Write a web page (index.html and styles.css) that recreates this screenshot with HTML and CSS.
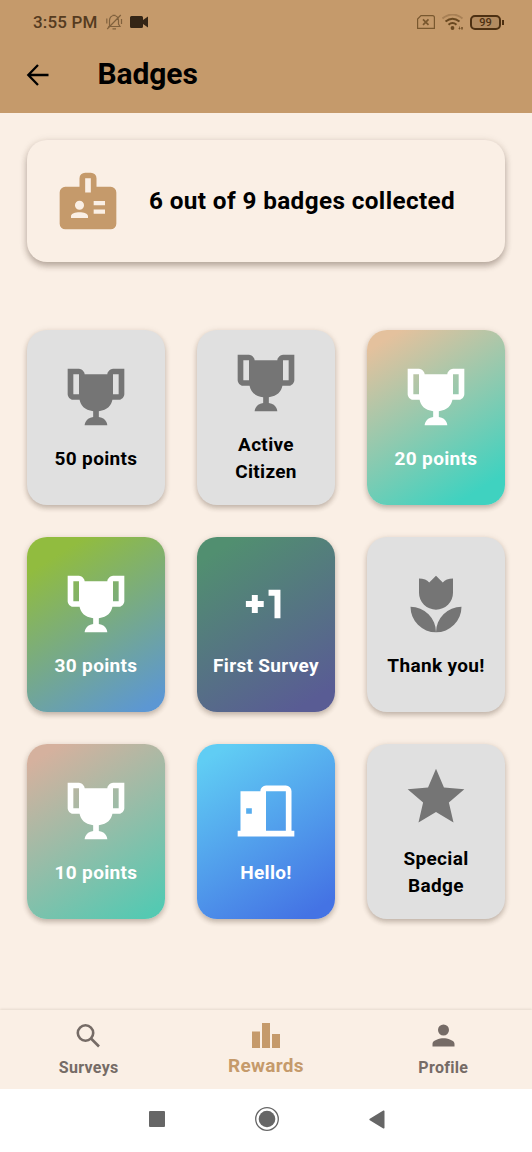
FILE: index.html
```html
<!DOCTYPE html>
<html lang="en">
<head>
<meta charset="utf-8">
<title>Badges</title>
<link rel="stylesheet" href="styles.css">
</head>
<body>
<svg class="defs" width="0" height="0" aria-hidden="true">
  <symbol id="trophy" viewBox="0 0 24 24"><path d="M18 2C17.1 2 16 3 16 4H8C8 3 6.9 2 6 2H2V11C2 12 3 13 4 13H6.2C6.6 15 7.9 16.7 11 17V19.08C8 19.54 8 22 8 22H16C16 22 16 19.54 13 19.08V17C16.1 16.7 17.4 15 17.8 13H20C21 13 22 12 22 11V2H18M6 11H4V4H6V11M20 11H18V4H20V11Z"/></symbol>
</svg>
<div class="screen">
  <header class="top">
    <div class="status">
      <span class="time">3:55 PM</span>
      <svg class="bell" viewBox="0 0 18 18"><path d="M4.5 13.500V7.500a4.500 5 0 0 1 9 0v3.500l1.500 2.500H3.200M7.500 15.800h3.500M2.200 16 15.800 2M1.800 5.500v5M16.500 6v5M7.500 2.300h3"/></svg>
      <svg class="camera" viewBox="0 0 18 12"><path d="M1.500 0h10A1.500 1.500 0 0 1 13 1.500V4l5-3.500v11L13 8v2.500a1.500 1.500 0 0 1-1.500 1.500h-10A1.500 1.500 0 0 1 0 10.500v-9A1.500 1.500 0 0 1 1.500 0z"/></svg>
      <svg class="sim" viewBox="0 0 18 14"><path d="M4 .6h11.500a1.900 1.900 0 0 1 1.900 1.900v10.900H.6V4z"/><path class="cross" d="m6 4.300 5.500 5.500m0-5.500-5.500 5.500"/></svg>
      <svg class="wifi" viewBox="0 0 22 17"><path class="faint" d="M.5 4.500Q10.500-3.500 20.500 4.500"/><path d="M3.500 7.500Q10.500 2 17.500 7.500M6.500 10.800q4-3.500 8 0"/><circle cx="10.500" cy="14" r="1.900"/><path class="tiny" d="M16.500 14.500h2m-1-2v3m2-2.500v2.500m1-2.500v2.500"/></svg>
      <span class="battery">99</span>
    </div>
    <div class="appbar">
      <svg class="back" viewBox="0 0 24 24"><path d="M22.500 12H3M12 2 2.300 12 12 22"/></svg>
      <h1 class="title">Badges</h1>
    </div>
  </header>

  <main class="content">
    <section class="summary">
      <svg class="icon" viewBox="0 0 24 24"><path fill-rule="evenodd" d="M9 7V4a2 2 0 0 1 2-2h2a2 2 0 0 1 2 2v3h5a2 2 0 0 1 2 2v11a2 2 0 0 1-2 2H4a2 2 0 0 1-2-2V9a2 2 0 0 1 2-2zM11 4v5h2V4zM7.400 13.500a1.600 1.600 0 1 0 3.200 0a1.600 1.600 0 1 0-3.200 0zM6 18h6v-.6C12 16.500 10.500 16 9 16s-3 .5-3 1.400zM14 12v1.500h4V12zM14 15v1.500h4V15z"/></svg>
      <p class="summary-text">6 out of 9 badges collected</p>
    </section>

    <section class="badges">
      <article class="badge"><svg class="icon"><use href="#trophy"/></svg><p class="label">50 points</p></article>
      <article class="badge"><svg class="icon"><use href="#trophy"/></svg><p class="label">Active<br>Citizen</p></article>
      <article class="badge earned twenty"><svg class="icon"><use href="#trophy"/></svg><p class="label">20 points</p></article>
      <article class="badge earned thirty"><svg class="icon"><use href="#trophy"/></svg><p class="label">30 points</p></article>
      <article class="badge earned first"><svg class="icon" viewBox="0 0 24 24"><path d="M7 8.800v2.100H4.900v2.200H7v2.100h2.100v-2.100h2.100v-2.200H9.100V8.800zM12.900 7v2.100H15v7.900h2.100V7z"/></svg><p class="label">First Survey</p></article>
      <article class="badge"><svg class="icon" viewBox="0 0 24 24"><path d="M3 13A9 9 0 0 0 12 22A9 9 0 0 0 3 13M12 22A9 9 0 0 0 21 13A9 9 0 0 0 12 22M18 3V8A6 6 0 0 1 6 8V3C6.740 3 7.470 3.120 8.160 3.390C8.710 3.620 9.200 3.960 9.610 4.390L12 2L14.390 4.390C14.800 3.960 15.290 3.620 15.840 3.390C16.530 3.120 17.260 3 18 3Z"/></svg><p class="label">Thank you!</p></article>
      <article class="badge earned ten"><svg class="icon"><use href="#trophy"/></svg><p class="label">10 points</p></article>
      <article class="badge earned hello"><svg class="icon" viewBox="0 0 24 24"><path fill-rule="evenodd" d="M2 19h1V5h7a2 2 0 0 1 2-2h7a2 2 0 0 1 2 2v14h1v2H2zM12 5v14h7V5zM5 11v2h2v-2z"/></svg><p class="label">Hello!</p></article>
      <article class="badge"><svg class="icon" viewBox="0 0 24 24"><path d="M12 17.270L18.180 21L16.540 13.970L22 9.240L14.810 8.620L12 2L9.190 8.620L2 9.240L7.450 13.970L5.820 21L12 17.270Z"/></svg><p class="label">Special<br>Badge</p></article>
    </section>
  </main>

  <nav class="tabs">
    <div class="tab"><svg class="tab-icon search" viewBox="0 0 33 33"><circle cx="13.500" cy="14" r="7.700"/><path d="m19 19.500 8 8"/></svg><span>Surveys</span></div>
    <div class="tab active"><svg class="tab-icon" viewBox="0 0 28 25"><path d="M0 8.500h8V25H0zM10 0h8v25h-8zM20 11h8v14h-8z"/></svg><span>Rewards</span></div>
    <div class="tab"><svg class="tab-icon" viewBox="0 0 24 24"><path d="M12 12a4 4 0 1 0 0-8 4 4 0 0 0 0 8zm0 2c-2.670 0-8 1.340-8 4v2h16v-2c0-2.660-5.330-4-8-4z"/></svg><span>Profile</span></div>
  </nav>
  <footer class="system">
    <svg class="key" viewBox="0 0 26 26"><rect x="5" y="5" width="16" height="16" rx="1"/></svg>
    <svg class="key" viewBox="0 0 26 26"><circle cx="13" cy="13" r="8.300"/><circle class="ring" cx="13" cy="13" r="11.300"/></svg>
    <svg class="key" viewBox="0 0 26 26"><path d="M20.500 5.200v16.600a.8.800 0 0 1-1.200.6L5.800 14.200a.8.800 0 0 1 0-1.400L19.300 4.600a.8.800 0 0 1 1.200.6z"/></svg>
  </footer>
</div>
</body>
</html>
```
FILE: styles.css
```css
* { box-sizing: border-box; margin: 0; }
body { font-family: Roboto, sans-serif; font-weight: 700; color: #000; background: #faefe5; }
svg { display: block; flex: none; }
.defs { position: absolute; }
.screen { width: 532px; height: 1152px; display: flex; flex-direction: column; overflow: hidden; }

.top { height: 113px; background: #c59a6b; }
.status { height: 44px; display: flex; align-items: center; padding: 0 31px 0 33px; }
.time { font-size: 17px; font-weight: 500; letter-spacing: .15px; width: 72px; color: #553b20; white-space: nowrap; }
.bell { width: 18px; height: 18px; fill: none; stroke: #80613d; stroke-width: 1.200; }
.camera { width: 18px; height: 12px; margin-left: 6.500px; fill: #342516; }
.sim { width: 18px; height: 14px; margin-left: auto; fill: none; stroke: #79582f; stroke-width: 1.200; }
.cross { stroke-width: 1.700; }
.wifi { width: 22px; height: 17px; margin: 0 6px 0 7px; fill: #694820; }
.wifi path { fill: none; stroke: #694820; stroke-width: 2; }
.wifi .faint { stroke: #a88055; }
.wifi .tiny { stroke-width: .7; }
.battery { position: relative; width: 31px; height: 15px; border: 2px solid #4d3012; border-radius: 5px; background: #b38b60; font-size: 11px; font-weight: 500; line-height: 11.500px; text-align: center; color: #4d3012; }
.battery::after { content: ""; position: absolute; right: -5px; top: 3px; width: 2px; height: 5px; background: #4d3012; }
.appbar { height: 61px; display: flex; align-items: center; padding-left: 26px; }
.back { width: 24px; height: 24px; fill: none; stroke: #000; stroke-width: 2.300; }
.title { margin: -2px 0 0 47.500px; font-size: 30px; font-weight: 700; line-height: 34px; letter-spacing: -.1px; }

.content { flex: 1; padding: 27px 27px 0; }
.summary { height: 122px; display: flex; align-items: center; padding-left: 27px; border-radius: 20px; background: #faefe5; box-shadow: 0 4px 6px rgba(60, 40, 25, .3), 0 1px 8px rgba(60, 40, 25, .12); }
.summary .icon { fill: #c59a6b; }
.summary-text { margin: -1px 0 0 27px; font-size: 24.300px; letter-spacing: .38px; white-space: nowrap; }
.icon { width: 68px; height: 68px; fill: #757575; }
.badges { display: grid; grid-template-columns: repeat(3, 138px); grid-auto-rows: 175px; column-gap: 32px; row-gap: 32px; margin-top: 67.500px; }
.badge { display: flex; flex-direction: column; align-items: center; justify-content: center; gap: 14px; border-radius: 20px; background: #e0e0e0; box-shadow: 0 3px 5px rgba(60, 40, 25, .24), 0 1px 7px rgba(60, 40, 25, .1); }
.label { font-size: 19px; line-height: 27px; letter-spacing: .33px; text-align: center; white-space: nowrap; }
.earned { color: #fff; }
.earned .icon { fill: #fff; }
.twenty { background: linear-gradient(148deg, #e4c19d 8%, #3fd2c0 88%); }
.thirty { background: linear-gradient(148deg, #91bc3f 14%, #5c97d3 94%); }
.first { background: linear-gradient(148deg, #518f70 10%, #595c94 90%); }
.ten { background: linear-gradient(148deg, #d5b19e 8%, #55c9b2 94%); }
.hello { background: linear-gradient(148deg, #60cdf4 8%, #4473e4 92%); }

.tabs { height: 79px; display: grid; grid-template-columns: repeat(3, 1fr); background: #faefe5; box-shadow: 0 -1px 2px rgba(90, 70, 50, .12); }
.tab { display: flex; flex-direction: column; align-items: center; padding-top: 9px; font-size: 16px; line-height: 20px; letter-spacing: .3px; color: #756b66; }
.tab-icon { width: 33px; height: 33px; margin-bottom: 6px; fill: #756b66; }
.search { fill: none; stroke: #756b66; stroke-width: 2.600; }
.active { padding-top: 13px; font-size: 19px; line-height: 22px; letter-spacing: .3px; color: #c59a6b; }
.active .tab-icon { width: 28px; height: 25px; margin-bottom: 7px; fill: #c59a6b; }
.system { height: 63px; display: flex; justify-content: center; gap: 84px; padding: 17px 0 0 2px; background: #fff; }
.key { width: 26px; height: 26px; fill: #666; }
.ring { fill: none; stroke: #666; stroke-width: 1.300; }
```
